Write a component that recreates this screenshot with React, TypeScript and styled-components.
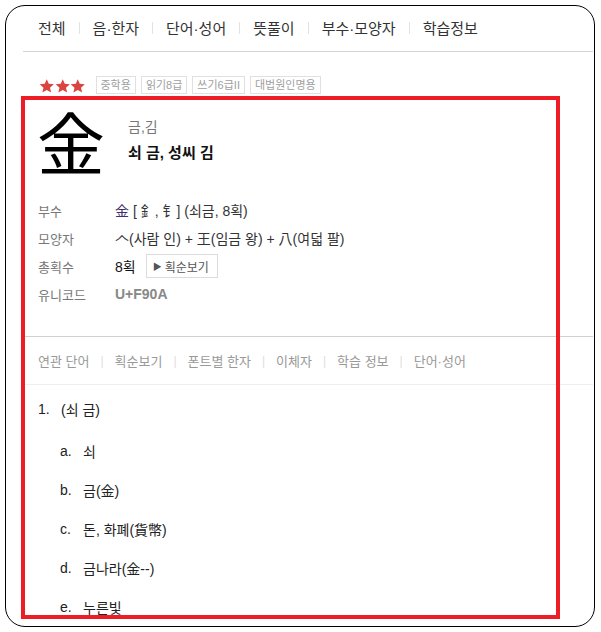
import React from 'react';
import styled, { createGlobalStyle } from 'styled-components';

const GlobalStyle = createGlobalStyle`
    html, body {
        margin: 0;
        padding: 0;
        background: #fff;
    }
    body {
        font-family: "Liberation Sans", "Noto Sans CJK KR", sans-serif;
        color: #333;
    }
`

const navItems = ['전체', '음·한자', '단어·성어', '뜻풀이', '부수·모양자', '학습정보']
const badges = ['중학용', '읽기8급', '쓰기6급II', '대법원인명용']
const tabs = ['연관 단어', '획순보기', '폰트별 한자', '이체자', '학습 정보', '단어·성어']
const meanings = [
    { mark: 'a.', text: '쇠' },
    { mark: 'b.', text: '금(金)' },
    { mark: 'c.', text: '돈, 화폐(貨幣)' },
    { mark: 'd.', text: '금나라(金--)' },
    { mark: 'e.', text: '누른빛' },
]

const Star = () => (
    <svg width="15.5" height="16" viewBox="0 0 24 24">
        <path d="M12 1.5l3.1 7.2 7.8.7-5.9 5.2 1.8 7.6L12 18.2l-6.8 4 1.8-7.6-5.9-5.2 7.8-.7z" fill="#d9453f" />
    </svg>
)

const App = () => {
    return (
        <Screen>
            <GlobalStyle />
            <Frame>
                <Page>
                    <Nav>
                        {navItems.map((item, i) => (
                            <React.Fragment key={item}>
                                {i > 0 && <NavSep />}
                                <NavItem>{item}</NavItem>
                            </React.Fragment>
                        ))}
                    </Nav>

                    <LevelRow>
                        <Stars>
                            <Star /><Star /><Star />
                        </Stars>
                        {badges.map(b => <Badge key={b}>{b}</Badge>)}
                    </LevelRow>

                    <Head>
                        <BigHanja>金</BigHanja>
                        <HeadText>
                            <Sound>금,김</Sound>
                            <Meaning>쇠 금, 성씨 김</Meaning>
                        </HeadText>
                    </Head>

                    <InfoList>
                        <InfoRow>
                            <InfoLabel>부수</InfoLabel>
                            <InfoValue>
                                <Radical>金</Radical> [ 釒, 钅] (쇠금, 8획)
                            </InfoValue>
                        </InfoRow>
                        <InfoRow>
                            <InfoLabel>모양자</InfoLabel>
                            <InfoValue>𠆢(사람 인) + 王(임금 왕) + 八(여덟 팔)</InfoValue>
                        </InfoRow>
                        <InfoRow>
                            <InfoLabel>총획수</InfoLabel>
                            <InfoValue>
                                <Strong>8획</Strong>
                                <StrokeButton><Tri>▶</Tri>획순보기</StrokeButton>
                            </InfoValue>
                        </InfoRow>
                        <InfoRow>
                            <InfoLabel>유니코드</InfoLabel>
                            <InfoValue $muted>U+F90A</InfoValue>
                        </InfoRow>
                    </InfoList>

                    <Tabs>
                        {tabs.map((t, i) => (
                            <React.Fragment key={t}>
                                {i > 0 && <TabSep>|</TabSep>}
                                <Tab>{t}</Tab>
                            </React.Fragment>
                        ))}
                    </Tabs>

                    <MeanBlock>
                        <MeanTitle><Num>1.</Num>(쇠 금)</MeanTitle>
                        {meanings.map(m => (
                            <MeanItem key={m.mark}>
                                <Num>{m.mark}</Num>{m.text}
                            </MeanItem>
                        ))}
                    </MeanBlock>
                </Page>
            </Frame>
            <Highlight />
        </Screen>
    )
}

export default App

const Screen = styled.div`
    position: relative;
    width: 601px;
    height: 632px;
    padding: 5px 6px 5px 5px;
    box-sizing: border-box;
    background: #fff;
`

const Frame = styled.div`
    height: 622px;
    border: 1px solid #000;
    border-radius: 20px;
    overflow: hidden;
    box-sizing: border-box;
`

const Page = styled.div`
    margin: 0 1px 0 17px;
`

const Nav = styled.div`
    display: flex;
    align-items: center;
    height: 43px;
    padding: 0 0 2px 15px;
    border-bottom: 1px solid #d4d4d4;
`

const NavItem = styled.span`
    font-size: 15px;
    color: #333;
`

const NavSep = styled.span`
    width: 1px;
    height: 12px;
    margin: 0 13px;
    background: #e2e2e2;
`

const LevelRow = styled.div`
    display: flex;
    align-items: center;
    gap: 5px;
    margin-top: 24px;
    padding-left: 16px;
`

const Stars = styled.span`
    display: flex;
    margin-right: 5px;
    padding-top: 2px;
`

const Badge = styled.span`
    height: 16px;
    line-height: 16px;
    padding: 0 4px;
    border: 1px solid #e0e0e0;
    font-size: 11px;
    color: #a0a0a0;
`

const Head = styled.div`
    display: flex;
    align-items: center;
    gap: 23px;
    margin-top: -2px;
    padding-left: 14px;
`

const BigHanja = styled.div`
    font-family: "Noto Sans CJK KR", sans-serif;
    font-size: 68px;
    line-height: 98px;
    color: #000;
`

const HeadText = styled.div`
    display: flex;
    flex-direction: column;
    gap: 5px;
    margin-top: -5px;
`

const Sound = styled.div`
    font-size: 14px;
    color: #777;
`

const Meaning = styled.div`
    font-size: 15px;
    font-weight: bold;
    color: #111;
`

const InfoList = styled.div`
    display: flex;
    flex-direction: column;
    margin-top: 6px;
    padding-left: 15px;
`

const InfoRow = styled.div`
    display: flex;
    align-items: center;
    height: 28px;
`

const InfoLabel = styled.div`
    width: 77px;
    font-size: 13px;
    color: #777;
`

const InfoValue = styled.div<{ $muted?: boolean }>`
    display: flex;
    align-items: center;
    font-size: 14px;
    color: ${p => p.$muted ? '#888' : '#333'};
    font-weight: ${p => p.$muted ? 'bold' : 'normal'};
    white-space: pre;
`

const Radical = styled.span`
    color: #3f2f6e;
    font-size: 14px;
`

const Strong = styled.span`
    color: #111;
`

const StrokeButton = styled.span`
    display: inline-flex;
    align-items: center;
    gap: 3px;
    height: 22px;
    margin-left: 10px;
    padding: 0 8px 0 6px;
    border: 1px solid #dcdcdc;
    font-size: 12px;
    color: #555;
`

const Tri = styled.span`
    font-size: 9px;
    color: #555;
`

const Tabs = styled.div`
    display: flex;
    align-items: center;
    height: 47px;
    margin-top: 28px;
    padding-left: 15px;
    border-top: 1px solid #d0d0d0;
    border-bottom: 1px solid #eee;
`

const Tab = styled.span`
    font-size: 13px;
    color: #999;
`

const TabSep = styled.span`
    margin: 0 11px;
    font-size: 12px;
    color: #ddd;
`

const MeanBlock = styled.div`
    padding: 14px 0 0 15px;
`

const MeanTitle = styled.div`
    display: flex;
    height: 20px;
    align-items: center;
    font-size: 14px;
    color: #222;
`

const MeanItem = styled.div`
    display: flex;
    align-items: center;
    height: 20px;
    margin-top: 19px;
    padding-left: 22px;
    font-size: 14px;
    color: #222;

    &:nth-child(2) {
        margin-top: 22px;
    }
`

const Num = styled.span`
    width: 23px;
`

const Highlight = styled.div`
    position: absolute;
    left: 21px;
    top: 96px;
    width: 539px;
    height: 523px;
    border: 4px solid #ee1c24;
    box-sizing: border-box;
    pointer-events: none;
`
